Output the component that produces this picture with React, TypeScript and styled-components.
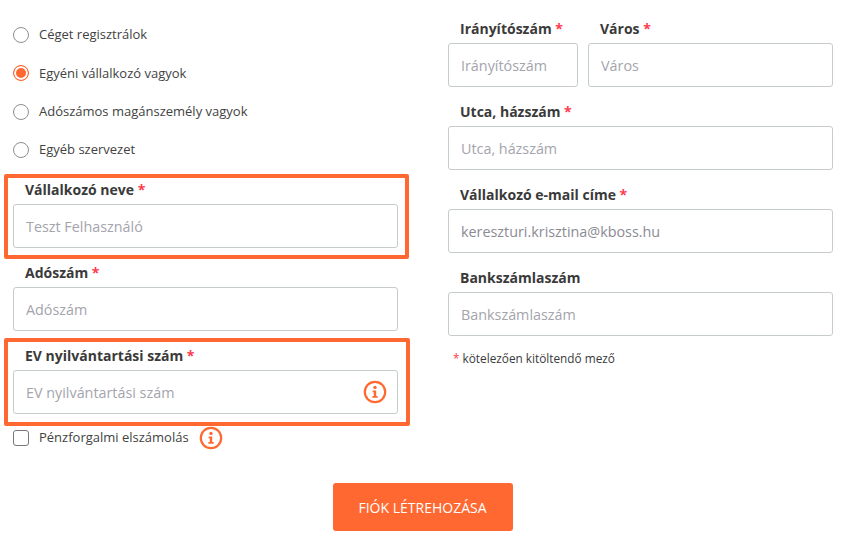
import React from 'react';
import styled, { createGlobalStyle } from 'styled-components';

const GlobalStyle = createGlobalStyle`
  html, body {
    margin: 0;
    padding: 0;
    background: #fff;
    font-family: 'Open Sans', sans-serif;
    color: #3a3a3a;
  }
  * {
    box-sizing: border-box;
  }
`;

const Page = styled.form`
  width: 842px;
  height: 535px;
  overflow: hidden;
  padding: 0 9px 0 13px;
`;

const Columns = styled.div`
  display: flex;
  gap: 50px;
  height: 483px;
`;

const Column = styled.div`
  width: 385px;
  display: flex;
  flex-direction: column;
`;

const RadioGroup = styled.div`
  display: flex;
  flex-direction: column;
  gap: 18.3px;
  padding-top: 25px;
  margin-bottom: 14px;
`;

const OptionRow = styled.label`
  display: flex;
  align-items: center;
  gap: 10px;
  height: 20px;
  font-size: 13px;
  color: #424242;
`;

const OptionText = styled.span`
  padding-bottom: 1.3px;
`;

const RadioMark = styled.span<{ $on?: boolean }>`
  width: 16px;
  height: 16px;
  border-radius: 50%;
  border: 1px solid ${p => (p.$on ? '#ff6830' : '#8e8e8e')};
  background: ${p => (p.$on ? '#ff6830' : '#fff')};
  box-shadow: ${p => (p.$on ? 'inset 0 0 0 2px #fff' : 'none')};
`;

const CheckMark = styled.span`
  width: 16px;
  height: 16px;
  border-radius: 3px;
  border: 1px solid #777;
  background: #fff;
`;

const Highlight = styled.div<{ $top: number; $bottom: number; $pad: number; $right: number; $base: number }>`
  border: 4px solid #ff6830;
  border-radius: 2px;
  margin: ${p => p.$top}px ${p => p.$right}px ${p => p.$bottom}px -9px;
  padding: ${p => p.$pad}px ${p => -p.$right - 4}px ${p => p.$base}px 5px;
`;

const Field = styled.div<{ $width?: number; $grow?: boolean }>`
  width: ${p => (p.$width ? `${p.$width}px` : 'auto')};
  flex-grow: ${p => (p.$grow ? 1 : 0)};
`;

const Label = styled.div`
  height: 20px;
  line-height: 20px;
  margin-bottom: 4px;
  padding-left: 12px;
  font-size: 14px;
  font-weight: 700;
  color: #3a3a3a;
`;

const Star = styled.span`
  color: #ff3b4e;
`;

const InputBox = styled.div`
  position: relative;
  height: 44px;
`;

const Input = styled.input`
  width: 100%;
  height: 44px;
  padding: 1px 12px 0;
  border: 1px solid #c6cbcb;
  border-radius: 3px;
  outline: none;
  background: #fff;
  font-family: 'Open Sans', sans-serif;
  font-size: 14.35px;
  color: #8b8b93;
  &::placeholder {
    color: #a4a4ac;
    opacity: 1;
  }
`;

const InfoSlot = styled.span`
  position: absolute;
  right: 11px;
  top: 10px;
  display: flex;
`;

const Row = styled.div`
  display: flex;
  gap: 10px;
`;

const RightStack = styled.div`
  display: flex;
  flex-direction: column;
  gap: 15px;
  padding-top: 19px;
`;

const Note = styled.div`
  margin-top: 14px;
  padding-left: 5px;
  font-size: 11.8px;
  color: #3a3a3a;
`;

const CheckRow = styled(OptionRow)`
  height: 24px;
`;

const Actions = styled.div`
  display: flex;
  justify-content: center;
  padding-right: 1px;
`;

const SubmitButton = styled.button`
  width: 180px;
  height: 48px;
  border: 0;
  border-radius: 3px;
  background: #ff6830;
  color: #fff;
  font-family: 'Open Sans', sans-serif;
  font-size: 14px;
`;

const InfoIcon = () => (
  <svg width="24" height="24" viewBox="0 0 24 24" fill="none">
    <circle cx="12" cy="12" r="10.2" stroke="#ff6830" strokeWidth="2.2" />
    <circle cx="12" cy="7.4" r="1.7" fill="#ff6830" />
    <path
      d="M9.6 10.4h3.6v5.5h1.4v1.8H9.4v-1.8h1.4v-3.7H9.6z"
      fill="#ff6830"
    />
  </svg>
);

const Req = ({ children }: { children: string }) => (
  <Label>
    {children} <Star>*</Star>
  </Label>
);

const App = () => {
  return (
    <Page>
      <GlobalStyle />
      <Columns>
        <Column>
          <RadioGroup>
            <OptionRow>
              <RadioMark />
              <OptionText>Céget regisztrálok</OptionText>
            </OptionRow>
            <OptionRow>
              <RadioMark $on />
              <OptionText>Egyéni vállalkozó vagyok</OptionText>
            </OptionRow>
            <OptionRow>
              <RadioMark />
              <OptionText>Adószámos magánszemély vagyok</OptionText>
            </OptionRow>
            <OptionRow>
              <RadioMark />
              <OptionText>Egyéb szervezet</OptionText>
            </OptionRow>
          </RadioGroup>
          <Highlight $top={0} $bottom={4} $pad={2} $right={-11} $base={7}>
            <Req>Vállalkozó neve</Req>
            <InputBox>
              <Input placeholder="Teszt Felhasználó" readOnly />
            </InputBox>
          </Highlight>
          <Field>
            <Req>Adószám</Req>
            <InputBox>
              <Input placeholder="Adószám" readOnly />
            </InputBox>
          </Field>
          <Highlight $top={7} $bottom={0} $pad={4} $right={-12} $base={8}>
            <Req>EV nyilvántartási szám</Req>
            <InputBox>
              <Input placeholder="EV nyilvántartási szám" readOnly />
              <InfoSlot>
                <InfoIcon />
              </InfoSlot>
            </InputBox>
          </Highlight>
          <CheckRow>
            <CheckMark />
            <OptionText>Pénzforgalmi elszámolás</OptionText>
            <InfoIcon />
          </CheckRow>
        </Column>
        <Column>
          <RightStack>
            <Row>
              <Field $width={130}>
                <Req>Irányítószám</Req>
                <Input placeholder="Irányítószám" readOnly />
              </Field>
              <Field $grow>
                <Req>Város</Req>
                <Input placeholder="Város" readOnly />
              </Field>
            </Row>
            <Field>
              <Req>Utca, házszám</Req>
              <Input placeholder="Utca, házszám" readOnly />
            </Field>
            <Field>
              <Req>Vállalkozó e-mail címe</Req>
              <Input value="kereszturi.krisztina@kboss.hu" readOnly />
            </Field>
            <Field>
              <Label>Bankszámlaszám</Label>
              <Input placeholder="Bankszámlaszám" readOnly />
            </Field>
          </RightStack>
          <Note>
            <Star>*</Star> kötelezően kitöltendő mező
          </Note>
        </Column>
      </Columns>
      <Actions>
        <SubmitButton type="button">FIÓK LÉTREHOZÁSA</SubmitButton>
      </Actions>
    </Page>
  );
};

export default App;
